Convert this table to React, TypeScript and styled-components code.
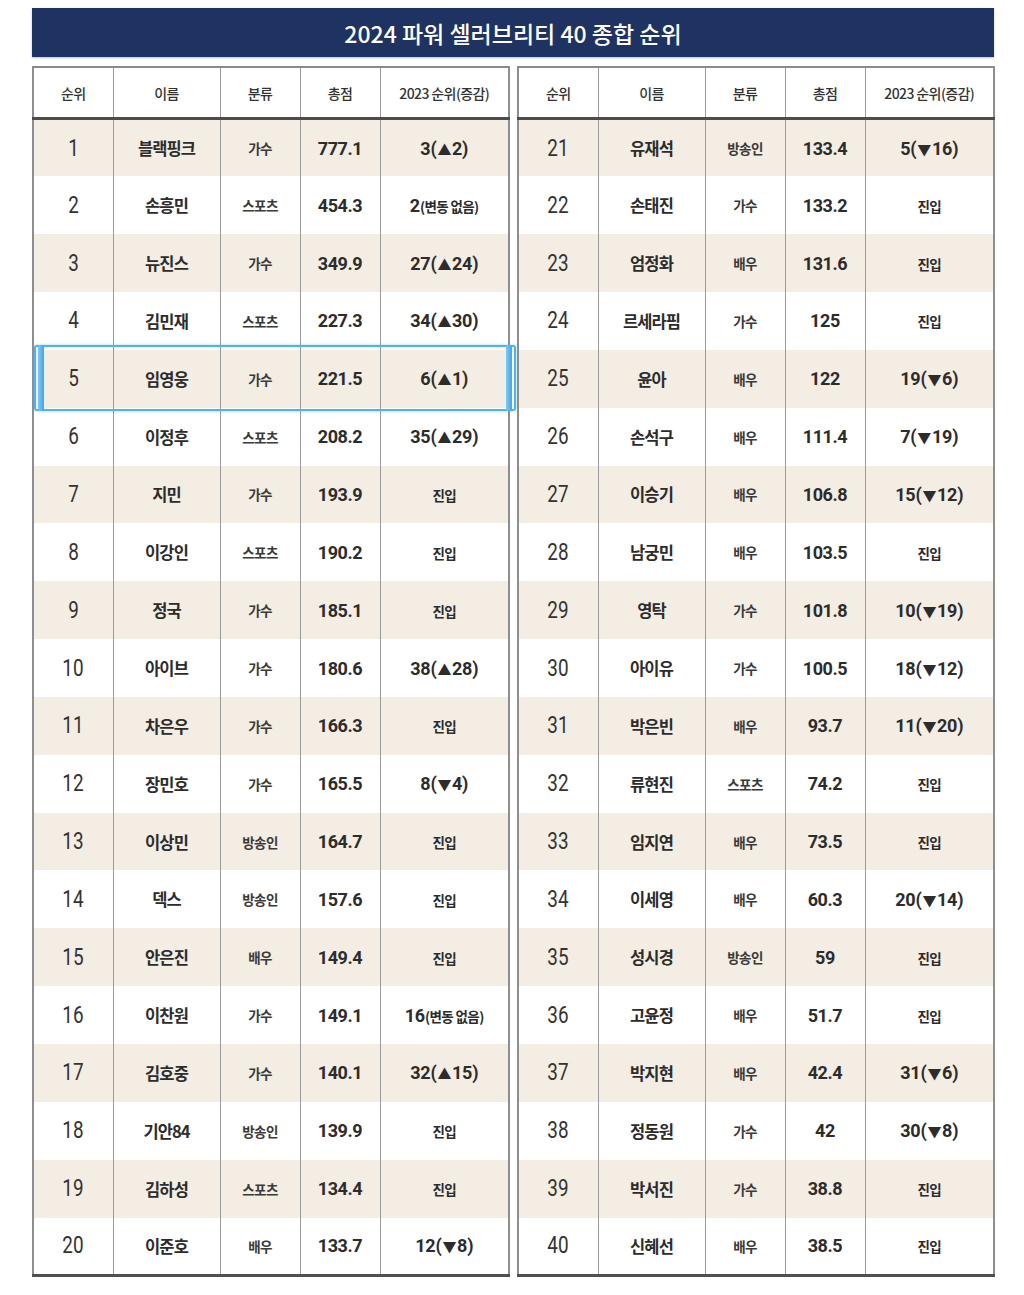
import React from 'react';
import styled, { createGlobalStyle } from 'styled-components';

type Entry = [number, string, string, string, string];

const LEFT: Entry[] = [
  [1, '블랙핑크', '가수', '777.1', '3|▲2'],
  [2, '손흥민', '스포츠', '454.3', '2|='],
  [3, '뉴진스', '가수', '349.9', '27|▲24'],
  [4, '김민재', '스포츠', '227.3', '34|▲30'],
  [5, '임영웅', '가수', '221.5', '6|▲1'],
  [6, '이정후', '스포츠', '208.2', '35|▲29'],
  [7, '지민', '가수', '193.9', 'new'],
  [8, '이강인', '스포츠', '190.2', 'new'],
  [9, '정국', '가수', '185.1', 'new'],
  [10, '아이브', '가수', '180.6', '38|▲28'],
  [11, '차은우', '가수', '166.3', 'new'],
  [12, '장민호', '가수', '165.5', '8|▼4'],
  [13, '이상민', '방송인', '164.7', 'new'],
  [14, '덱스', '방송인', '157.6', 'new'],
  [15, '안은진', '배우', '149.4', 'new'],
  [16, '이찬원', '가수', '149.1', '16|='],
  [17, '김호중', '가수', '140.1', '32|▲15'],
  [18, '기안84', '방송인', '139.9', 'new'],
  [19, '김하성', '스포츠', '134.4', 'new'],
  [20, '이준호', '배우', '133.7', '12|▼8'],
];

const RIGHT: Entry[] = [
  [21, '유재석', '방송인', '133.4', '5|▼16'],
  [22, '손태진', '가수', '133.2', 'new'],
  [23, '엄정화', '배우', '131.6', 'new'],
  [24, '르세라핌', '가수', '125', 'new'],
  [25, '윤아', '배우', '122', '19|▼6'],
  [26, '손석구', '배우', '111.4', '7|▼19'],
  [27, '이승기', '배우', '106.8', '15|▼12'],
  [28, '남궁민', '배우', '103.5', 'new'],
  [29, '영탁', '가수', '101.8', '10|▼19'],
  [30, '아이유', '가수', '100.5', '18|▼12'],
  [31, '박은빈', '배우', '93.7', '11|▼20'],
  [32, '류현진', '스포츠', '74.2', 'new'],
  [33, '임지연', '배우', '73.5', 'new'],
  [34, '이세영', '배우', '60.3', '20|▼14'],
  [35, '성시경', '방송인', '59', 'new'],
  [36, '고윤정', '배우', '51.7', 'new'],
  [37, '박지현', '배우', '42.4', '31|▼6'],
  [38, '정동원', '가수', '42', '30|▼8'],
  [39, '박서진', '가수', '38.8', 'new'],
  [40, '신혜선', '배우', '38.5', 'new'],
];

const GlobalStyle = createGlobalStyle`
  body {
    margin: 0;
    background: #ffffff;
    font-family: "Noto Sans CJK KR", "Noto Sans", sans-serif;
    color: #2c2c2c;
  }
`;

const Page = styled.div`
  width: 962px;
  padding: 8px 0 20px 32px;
`;

const TitleBar = styled.div`
  height: 49px;
  background: #1f3363;
  color: #ffffff;
  display: flex;
  align-items: center;
  justify-content: center;
  font-size: 23px;
  font-weight: 500;
  letter-spacing: 0;
  box-shadow: 0 1px 2px rgba(0, 0, 0, 0.25);
`;

const Tables = styled.div`
  display: grid;
  grid-template-columns: 475px 476px;
  column-gap: 10px;
  margin-top: 9px;
`;

const TableWrap = styled.div`
  position: relative;
`;

const Table = styled.table`
  width: 100%;
  border-collapse: collapse;
  table-layout: fixed;
  border-left: 2px solid #8e8e8e;
  border-right: 2px solid #8e8e8e;
  border-top: 2px solid #8a8a8a;
  border-bottom: 3px solid #505050;
`;

const HeadCell = styled.th`
  height: 49px;
  padding: 0;
  font-size: 14px;
  font-weight: 500;
  letter-spacing: -0.6px;
  color: #333333;
  text-align: center;
  border-left: 1.5px solid #9a9a9a;
  border-bottom: 3px solid #4c4c4c;
  background: #ffffff;
`;

const Row = styled.tr<{ $shade: boolean }>`
  height: 57.85px;
  background: ${({ $shade }) => ($shade ? '#f4ede3' : '#ffffff')};
`;

const Cell = styled.td`
  padding: 0;
  text-align: center;
  vertical-align: middle;
  border-left: 1.5px solid #9a9a9a;
  color: #2c2c2c;
`;

const RankCell = styled(Cell)`
  font-family: "Roboto", "Liberation Sans", sans-serif;
  font-size: 23px;
  font-weight: 400;
  color: #333333;
`;

const Condensed = styled.span`
  display: inline-block;
  transform: scaleX(0.82);
`;

const NameCell = styled(Cell)`
  font-size: 16.5px;
  font-weight: 700;
  letter-spacing: -0.9px;
`;

const KindCell = styled(Cell)`
  font-size: 13.5px;
  font-weight: 700;
  letter-spacing: -0.6px;
  color: #3a3a3a;
`;

const ScoreCell = styled(Cell)`
  font-family: "Roboto", "Liberation Sans", sans-serif;
  font-size: 18px;
  font-weight: 700;
  letter-spacing: -0.4px;
`;

const PrevCell = styled(Cell)`
  font-family: "Roboto", "Liberation Sans", sans-serif;
  font-size: 18px;
  font-weight: 700;
  letter-spacing: -0.3px;
`;

const Arrow = styled.span`
  font-family: "Noto Sans CJK KR", sans-serif;
  font-size: 14px;
  margin: 0 1px;
`;

const SmallNote = styled.span`
  font-family: "Noto Sans CJK KR", sans-serif;
  font-size: 13.5px;
  font-weight: 700;
  letter-spacing: -0.6px;
`;

const Highlight = styled.div`
  position: absolute;
  left: 2px;
  top: 279px;
  width: 478px;
  height: 62px;
  border: 2px solid #4eb2f2;
  border-radius: 3px;
  box-shadow: 0 0 3px rgba(78, 178, 242, 0.6);
  pointer-events: none;

  &::before,
  &::after {
    content: '';
    position: absolute;
    top: -2px;
    bottom: -2px;
    width: 6px;
    background: linear-gradient(90deg, #7ccaf7, #3fa6ee);
    border-radius: 2px;
  }
  &::before {
    left: 2px;
  }
  &::after {
    right: 2px;
  }
`;

const HEADERS = ['순위', '이름', '분류', '총점', '2023 순위(증감)'];
const WIDTHS = [80, 107, 80, 80, 129];

function PrevRank({ value }: { value: string }) {
  if (value === 'new') return <SmallNote>진입</SmallNote>;
  const [rank, change] = value.split('|');
  if (change === '=') {
    return (
      <>
        {rank}
        <SmallNote>(변동 없음)</SmallNote>
      </>
    );
  }
  return (
    <>
      {rank}(<Arrow>{change[0]}</Arrow>
      {change.slice(1)})
    </>
  );
}

function RankTable({ rows, highlight }: { rows: Entry[]; highlight?: boolean }) {
  return (
    <TableWrap>
      <Table>
        <colgroup>
          {WIDTHS.map((w, i) => (
            <col key={i} style={{ width: w }} />
          ))}
        </colgroup>
        <thead>
          <tr>
            {HEADERS.map((h) => (
              <HeadCell key={h}>{h}</HeadCell>
            ))}
          </tr>
        </thead>
        <tbody>
          {rows.map(([rank, name, kind, score, prev]) => (
            <Row key={rank} $shade={rank % 2 === 1}>
              <RankCell>
                <Condensed>{rank}</Condensed>
              </RankCell>
              <NameCell>{name}</NameCell>
              <KindCell>{kind}</KindCell>
              <ScoreCell>{score}</ScoreCell>
              <PrevCell>
                <PrevRank value={prev} />
              </PrevCell>
            </Row>
          ))}
        </tbody>
      </Table>
      {highlight && <Highlight />}
    </TableWrap>
  );
}

export default function App() {
  return (
    <Page>
      <GlobalStyle />
      <TitleBar>2024 파워 셀러브리티 40 종합 순위</TitleBar>
      <Tables>
        <RankTable rows={LEFT} highlight />
        <RankTable rows={RIGHT} />
      </Tables>
    </Page>
  );
}
